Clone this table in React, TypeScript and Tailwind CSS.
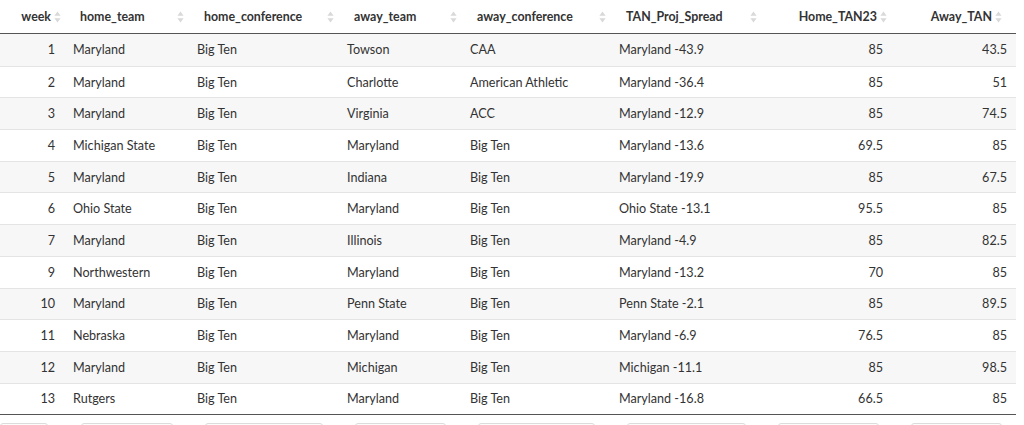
import React from "react";

const rows: [string, string, string, string, string, string, string, string][] = [
  ["1", "Maryland", "Big Ten", "Towson", "CAA", "Maryland -43.9", "85", "43.5"],
  ["2", "Maryland", "Big Ten", "Charlotte", "American Athletic", "Maryland -36.4", "85", "51"],
  ["3", "Maryland", "Big Ten", "Virginia", "ACC", "Maryland -12.9", "85", "74.5"],
  ["4", "Michigan State", "Big Ten", "Maryland", "Big Ten", "Maryland -13.6", "69.5", "85"],
  ["5", "Maryland", "Big Ten", "Indiana", "Big Ten", "Maryland -19.9", "85", "67.5"],
  ["6", "Ohio State", "Big Ten", "Maryland", "Big Ten", "Ohio State -13.1", "95.5", "85"],
  ["7", "Maryland", "Big Ten", "Illinois", "Big Ten", "Maryland -4.9", "85", "82.5"],
  ["9", "Northwestern", "Big Ten", "Maryland", "Big Ten", "Maryland -13.2", "70", "85"],
  ["10", "Maryland", "Big Ten", "Penn State", "Big Ten", "Penn State -2.1", "85", "89.5"],
  ["11", "Nebraska", "Big Ten", "Maryland", "Big Ten", "Maryland -6.9", "76.5", "85"],
  ["12", "Maryland", "Big Ten", "Michigan", "Big Ten", "Michigan -11.1", "85", "98.5"],
  ["13", "Rutgers", "Big Ten", "Maryland", "Big Ten", "Maryland -16.8", "66.5", "85"],
];

const grid = "grid grid-cols-[63px_124px_150px_123px_149px_151px_133px_123px]";

function SortIcon() {
  return (
    <svg width="7" height="12" viewBox="0 0 7 12" className="shrink-0">
      <path d="M3.5 0.5 L6.6 4.8 L0.4 4.8 Z" fill="#d9d9d9" />
      <path d="M3.5 11.5 L6.6 7.2 L0.4 7.2 Z" fill="#d9d9d9" />
    </svg>
  );
}

function HeadLeft({ label }: { label: string }) {
  return (
    <div className="flex items-center pl-[17px] pr-[3px] pt-[1px] h-full">
      <span>{label}</span>
      <span className="ml-auto flex">
        <SortIcon />
      </span>
    </div>
  );
}

function HeadRight({ label, pr }: { label: string; pr: string }) {
  return (
    <div className={`flex items-center justify-end gap-[3px] pt-[1px] h-full ${pr}`}>
      <span>{label}</span>
      <SortIcon />
    </div>
  );
}

export default function App() {
  return (
    <div
      className="w-[1024px] h-[425px] overflow-hidden bg-white text-[#333333] text-[12.6px]"
      style={{ fontFamily: "Lato, 'Noto Sans', sans-serif" }}
    >
      <div className="w-[1016px]">
        <div className={`${grid} h-[34px] border-b border-[#555555] font-bold text-[12.4px]`}>
          <HeadRight label="week" pr="pr-[2px]" />
          <HeadLeft label="home_team" />
          <HeadLeft label="home_conference" />
          <HeadLeft label="away_team" />
          <HeadLeft label="away_conference" />
          <HeadLeft label="TAN_Proj_Spread" />
          <HeadRight label="Home_TAN23" pr="pr-[6px]" />
          <HeadRight label="Away_TAN" pr="pr-[14px]" />
        </div>
        <div className="border-b border-[#555555]">
          {rows.map((r, i) => (
            <div
              key={i}
              className={`${grid} h-[31.7px] items-center pt-[2px] ${i > 0 ? "border-t border-[#e4e4e4]" : ""} ${
                i % 2 === 0 ? "bg-[#f7f7f7]" : "bg-white"
              }`}
            >
              <div className="text-right pr-[8px]">{r[0]}</div>
              <div className="pl-[10px]">{r[1]}</div>
              <div className="pl-[10px]">{r[2]}</div>
              <div className="pl-[10px]">{r[3]}</div>
              <div className="pl-[10px]">{r[4]}</div>
              <div className="pl-[10px]">{r[5]}</div>
              <div className="text-right pr-[10px]">{r[6]}</div>
              <div className="text-right pr-[9px]">{r[7]}</div>
            </div>
          ))}
        </div>
        <div className={`${grid} mt-[8px]`}>
          <div className="pr-[15px]">
            <div className="h-[24px] border border-[#dcdcdc] rounded-[3px] bg-[#fcfcfc]" />
          </div>
          {[0, 1, 2, 3, 4, 5, 6].map((k) => (
            <div key={k} className="pl-[18px] pr-[14px]">
              <div className="h-[24px] border border-[#dcdcdc] rounded-[3px] bg-[#fcfcfc]" />
            </div>
          ))}
        </div>
      </div>
    </div>
  );
}
